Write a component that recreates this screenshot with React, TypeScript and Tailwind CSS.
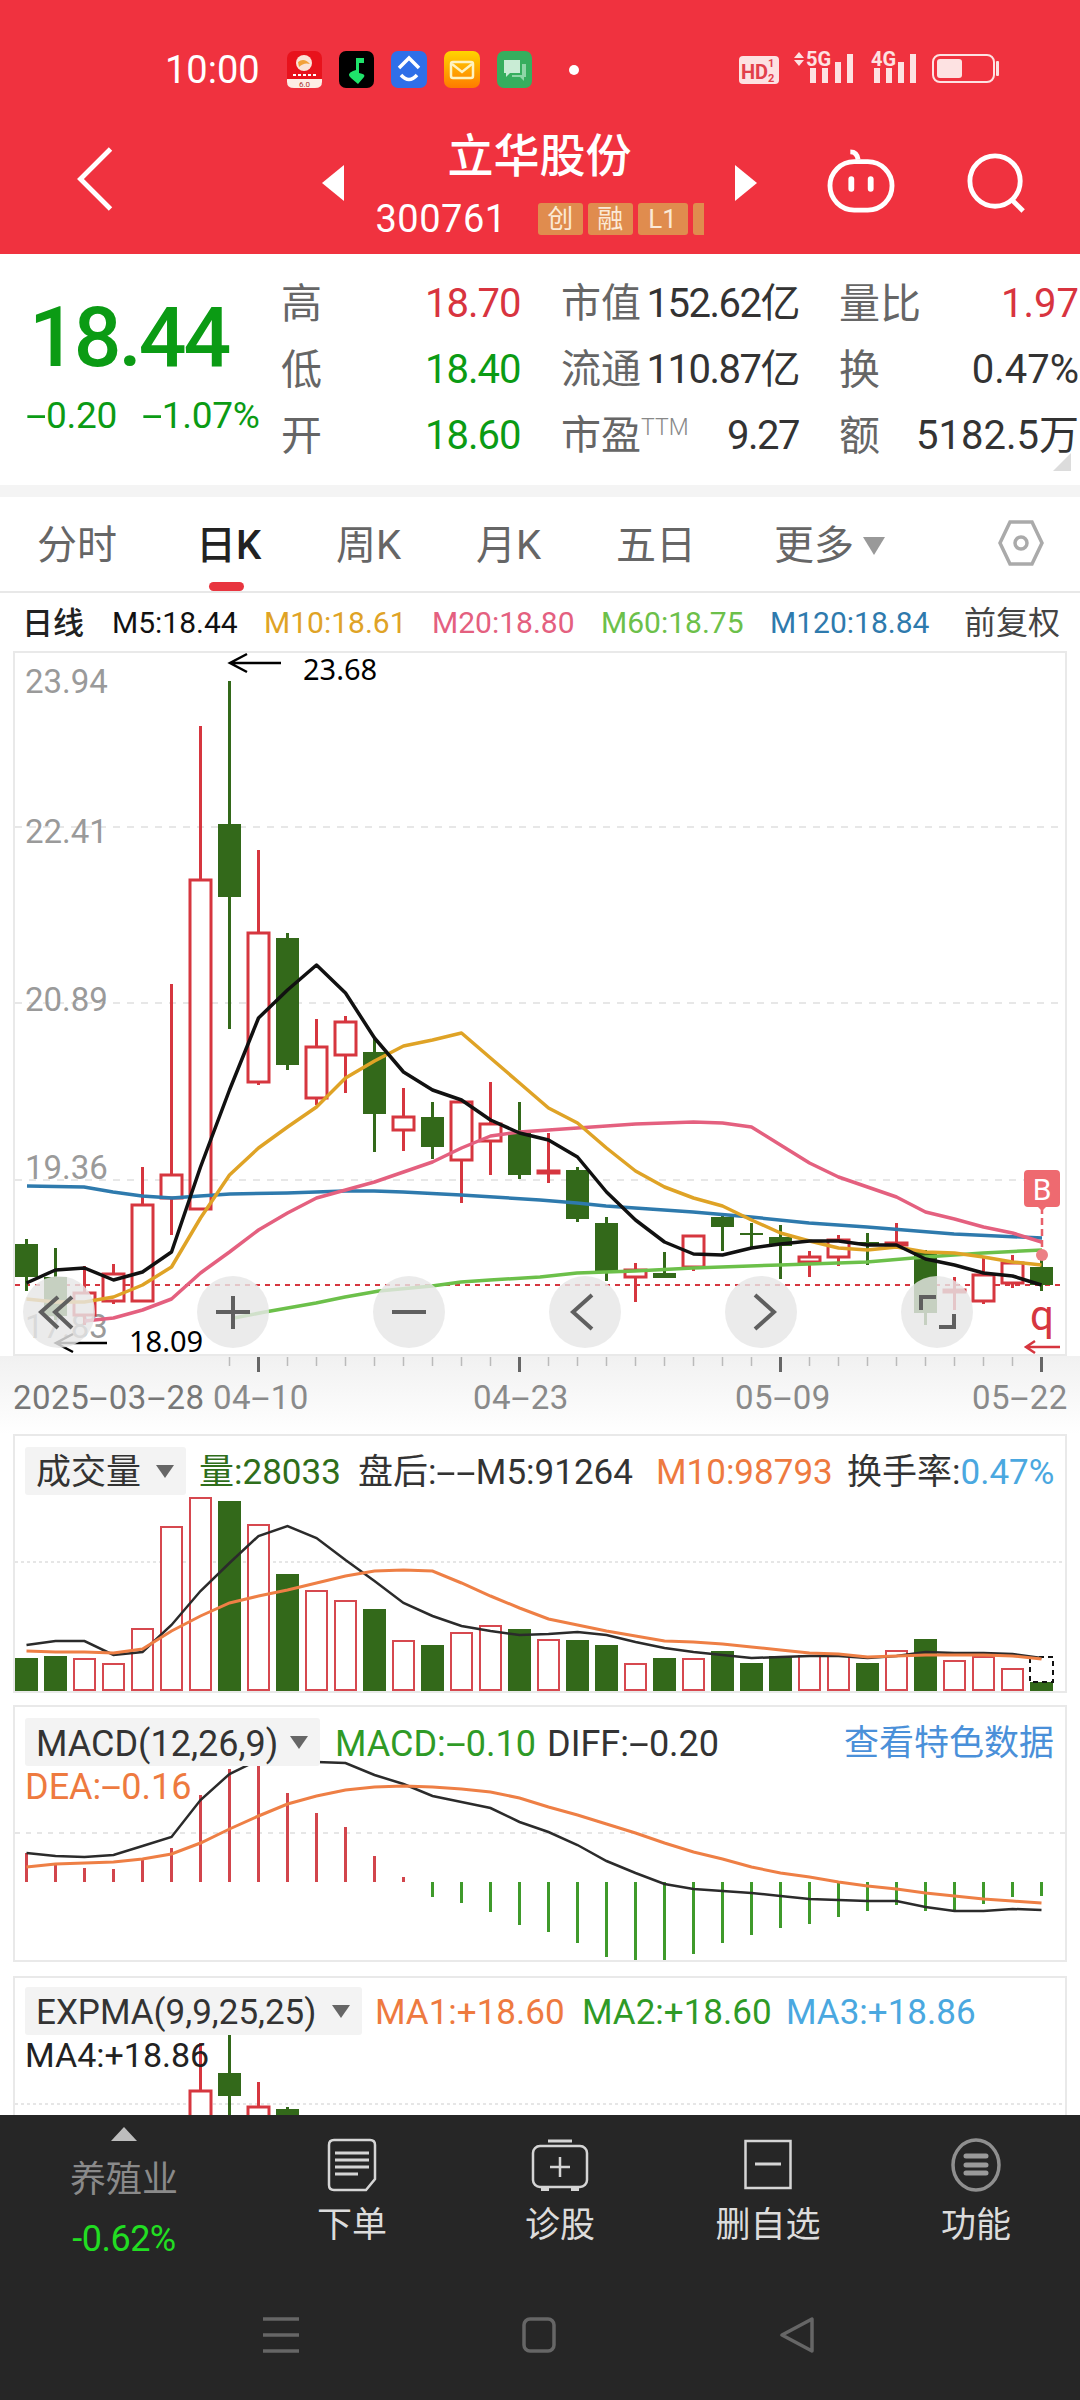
const RED = "#d6363f";
const DARK_GREEN = "#33691a";
const cx = (i: number) => 26.5 + 29 * i;
const line = (ys: number[], from = 0) => ys.map((y, i) => `${cx(i + from)},${y}`).join(" ");

// color, high, body top, body bottom, low
const candles: [string, number, number, number, number][] = [
  ["g", 1239, 1244, 1277, 1291], ["g", 1248, 1277, 1316, 1320], ["r", 1266, 1293, 1315, 1325], ["r", 1264, 1274, 1301, 1304],
  ["r", 1167, 1205, 1301, 1301], ["r", 984, 1175, 1198, 1235], ["r", 726, 880, 1209, 1209], ["g", 681, 824, 897, 1029],
  ["r", 850, 933, 1082, 1085], ["g", 933, 938, 1065, 1070], ["r", 1019, 1047, 1098, 1105], ["r", 1016, 1022, 1055, 1093],
  ["g", 1037, 1052, 1114, 1152], ["r", 1088, 1117, 1130, 1151], ["g", 1102, 1117, 1147, 1159], ["r", 1100, 1102, 1160, 1203],
  ["r", 1082, 1124, 1141, 1175], ["g", 1102, 1133, 1175, 1179], ["r", 1133, 1171, 1173, 1183], ["g", 1167, 1170, 1219, 1222],
  ["g", 1217, 1223, 1272, 1281], ["r", 1263, 1270, 1277, 1302], ["g", 1252, 1273, 1278, 1278], ["r", 1236, 1236, 1267, 1271],
  ["g", 1215, 1217, 1227, 1251], ["g", 1223, 1233, 1235, 1248], ["g", 1225, 1237, 1246, 1279], ["r", 1251, 1257, 1262, 1277],
  ["r", 1235, 1240, 1257, 1266], ["g", 1233, 1242, 1245, 1265], ["r", 1223, 1243, 1245, 1245], ["g", 1250, 1251, 1313, 1325],
  ["r", 1277, 1290, 1292, 1310], ["r", 1258, 1275, 1301, 1304], ["r", 1255, 1263, 1283, 1288], ["g", 1257, 1267, 1285, 1291],
];
const m5 = [1283,1270,1268,1280,1272,1252,1167,1090,1018,990,965,993,1038,1072,1090,1100,1120,1133,1140,1157,1192,1220,1242,1254,1255,1248,1244,1241,1241,1245,1245,1259,1265,1273,1276,1285];
const m10 = [1299,1302,1302,1297,1285,1267,1218,1175,1148,1127,1107,1078,1061,1046,1040,1033,1058,1083,1108,1123,1148,1171,1187,1198,1206,1220,1233,1241,1248,1250,1247,1252,1253,1257,1262,1265];
const m20 = [1321,1318,1310,1299,1273,1252,1230,1213,1198,1190,1182,1172,1162,1148,1136,1132,1130,1128,1126,1124,1123,1122,1123,1127,1145,1163,1177,1187,1197,1212,1219,1227,1233,1242];
const m60 = "234,1318 265,1312 316,1303 345,1297 379,1291 432,1286 461,1282 490,1280 540,1277 577,1273 635,1271 693,1268 780,1265 867,1262 925,1257 983,1253 1042,1250";
const m120 = "27,1186 84,1187 113,1192 142,1196 172,1198 200,1196 230,1194 287,1193 345,1191 374,1191 403,1192 461,1195 540,1200 577,1203 606,1206 693,1212 751,1217 809,1223 867,1227 954,1234 1042,1238";

const vols = [1660,1658,1661,1666,1631,1529,1500,1503,1527,1576,1593,1603,1611,1643,1647,1635,1628,1631,1642,1642,1647,1666,1660,1661,1653,1665,1658,1658,1658,1665,1653,1641,1663,1659,1671,1684];
const volBlack = [1647,1643,1643,1657,1654,1627,1593,1565,1538,1528,1540,1562,1583,1605,1618,1628,1633,1637,1636,1634,1637,1644,1650,1654,1657,1660,1659,1658,1658,1660,1658,1654,1655,1655,1656,1660];
const volOrange = [1653,1654,1654,1655,1651,1633,1618,1605,1598,1592,1585,1578,1573,1572,1573,1585,1598,1610,1621,1627,1633,1638,1643,1644,1646,1649,1652,1655,1656,1659,1658,1657,1657,1657,1658,1661];

const macdBars = [1853,1865,1868,1869,1860,1848,1795,1769,1766,1793,1813,1827,1856,1877,1897,1903,1912,1925,1932,1943,1957,1962,1962,1954,1943,1935,1928,1924,1917,1911,1905,1911,1911,1904,1897,1896];
const diff = [1853,1856,1857,1855,1846,1837,1800,1774,1760,1761,1762,1763,1775,1784,1796,1802,1808,1822,1832,1845,1861,1873,1884,1889,1891,1893,1896,1899,1900,1901,1901,1907,1911,1911,1909,1910];
const dea = [1867,1864,1863,1862,1859,1854,1843,1829,1816,1804,1796,1790,1787,1786,1787,1789,1792,1798,1807,1815,1824,1833,1843,1852,1859,1867,1873,1877,1882,1886,1889,1893,1896,1899,1901,1903];

// this app's number font has long dashes, Roboto's hyphen is short
function Dashed({ text }: { text: string }) {
  const parts = text.split("-");
  return (
    <>
      {parts.map((p, i) => (
        <span key={i}>
          {i > 0 && <span className="mx-[5px] inline-block scale-x-[2]">-</span>}
          {p}
        </span>
      ))}
    </>
  );
}

function Candle({ i, c }: { i: number; c: [string, number, number, number, number] }) {
  const [kind, high, top, bottom, low] = c;
  const x = cx(i);
  const color = kind === "r" ? RED : DARK_GREEN;
  return (
    <g>
      <line x1={x} x2={x} y1={high} y2={top} stroke={color} strokeWidth={3} />
      <line x1={x} x2={x} y1={bottom} y2={low} stroke={color} strokeWidth={3} />
      {kind === "r" ? (
        <rect x={x - 10.5} y={top} width={21} height={bottom - top} fill="#fff" stroke={color} strokeWidth={3} />
      ) : (
        <rect x={x - 11.5} y={top} width={23} height={bottom - top} fill={color} />
      )}
    </g>
  );
}

function CircleButton({ x, children }: { x: number; children: React.ReactNode }) {
  return (
    <g>
      <circle cx={x} cy={1312} r={36} fill="#e6e6e6" fillOpacity={0.82} />
      <g fill="none" stroke="#5f5f5f" strokeWidth={4}>{children}</g>
    </g>
  );
}

function MainChart() {
  const grid = [827, 1003, 1180];
  const labels: [string, number][] = [["23.94", 693], ["22.41", 843], ["20.89", 1011], ["19.36", 1179], ["17.83", 1338]];
  return (
    <svg width={1050} height={701} viewBox="15 653 1050 701" className="block overflow-visible">
      {grid.map((y) => (
        <line key={y} x1={15} x2={1065} y1={y} y2={y} stroke="#dfdfdf" strokeWidth={1.5} strokeDasharray="7 7" />
      ))}
      {labels.map(([t, y]) => (
        <text key={t} x={25} y={y} fontSize={33} fill="#9a9a9a">{t}</text>
      ))}
      <line x1={15} x2={1065} y1={1285} y2={1285} stroke="#d6363f" strokeWidth={2} strokeDasharray="5 5" />
      {candles.map((c, i) => <Candle key={i} i={i} c={c} />)}
      <g fill="none" strokeWidth={3.5} strokeLinejoin="round">
        <polyline points={m120} stroke="#2e7aad" />
        <polyline points={m60} stroke="#6cc04a" />
        <polyline points={line(m20, 2)} stroke="#e4607f" />
        <polyline points={line(m10)} stroke="#dfa326" />
        <polyline points={line(m5)} stroke="#111" />
      </g>
      <path d="M281 663H230M247 654L230 663L247 672" fill="none" stroke="#000" strokeWidth={2.5} />
      <text x={303} y={680} fontSize={29} fill="#000" fontFamily="Noto Sans">23.68</text>
      <path d="M107 1343H56M73 1334L56 1343L73 1352" fill="none" stroke="#000" strokeWidth={2.5} />
      <text x={129} y={1352} fontSize={29} fill="#000" fontFamily="Noto Sans">18.09</text>
      <CircleButton x={59}><path d="M58 1297L41 1312L58 1328M72 1297L55 1312L72 1328" /></CircleButton>
      <CircleButton x={233}><path d="M233 1296V1329M216 1312H250" /></CircleButton>
      <CircleButton x={409}><path d="M392 1312H426" /></CircleButton>
      <CircleButton x={585}><path d="M592 1295L573 1312L592 1329" /></CircleButton>
      <CircleButton x={761}><path d="M755 1295L774 1312L755 1329" /></CircleButton>
      <CircleButton x={937}><path d="M921 1310V1297H936M954 1314V1327H939" /></CircleButton>
      <line x1={1042} x2={1042} y1={1207} y2={1255} stroke="#e8606a" strokeWidth={2.5} strokeDasharray="7 4" />
      <circle cx={1042} cy={1255} r={6} fill="#ec7f85" />
      <path d="M1028 1170H1056Q1060 1170 1060 1174V1203Q1060 1207 1056 1207H1046L1042 1211L1038 1207H1028Q1024 1207 1024 1203V1174Q1024 1170 1028 1170Z" fill="#ee6a70" />
      <text x={1042} y={1200} fontSize={30} fill="#fff" textAnchor="middle">B</text>
      <text x={1042} y={1330} fontSize={42} fill="#d6363f" textAnchor="middle">q</text>
      <path d="M1060 1347H1026M1035 1341L1026 1347L1035 1353" fill="none" stroke="#d6363f" strokeWidth={2.5} />
    </svg>
  );
}

function VolumeChart() {
  return (
    <svg width={1050} height={255} viewBox="15 1438 1050 255" className="absolute inset-0">
      <line x1={15} x2={1065} y1={1564} y2={1564} stroke="#dedede" strokeWidth={1.5} strokeDasharray="3 3" />
      {vols.map((y, i) => {
        const red = [2,3,4,5,6,8,10,11,13,15,16,18,21,23,27,28,30,32,33,34].includes(i);
        return red ? (
          <rect key={i} x={cx(i) - 10.5} y={y} width={21} height={1692 - y} fill="#fff" stroke="#d6484f" strokeWidth={2} />
        ) : (
          <rect key={i} x={cx(i) - 11.5} y={y} width={23} height={1693 - y} fill={DARK_GREEN} />
        );
      })}
      <rect x={1030} y={1659} width={23} height={25} fill="#fff" stroke="#111" strokeWidth={2} strokeDasharray="5 4" />
      <polyline points={line(volBlack)} fill="none" stroke="#2b2b2b" strokeWidth={2.5} />
      <polyline points={line(volOrange)} fill="none" stroke="#ee7f45" strokeWidth={3} />
    </svg>
  );
}

function MacdChart() {
  return (
    <svg width={1050} height={253} viewBox="15 1707 1050 253" className="absolute inset-0">
      <line x1={15} x2={1065} y1={1833} y2={1833} stroke="#dedede" strokeWidth={1.5} strokeDasharray="5 6" />
      {macdBars.map((y, i) => {
        const red = i < 14;
        return <line key={i} x1={cx(i)} x2={cx(i)} y1={red ? y : 1882} y2={red ? 1882 : y} stroke={red ? "#d2454c" : "#3f9a2b"} strokeWidth={3} />;
      })}
      <polyline points={line(diff)} fill="none" stroke="#2b2b2b" strokeWidth={2.5} />
      <polyline points={line(dea)} fill="none" stroke="#ee7f45" strokeWidth={3} />
    </svg>
  );
}

function ExpmaChart() {
  return (
    <svg width={1050} height={139} viewBox="15 1978 1050 139" className="absolute inset-0">
      <line x1={15} x2={1065} y1={2104} y2={2104} stroke="#dedede" strokeWidth={1.5} strokeDasharray="3 3" />
      <Candle i={6} c={["r", 2043, 2091, 2130, 2130]} />
      <Candle i={7} c={["g", 2030, 2073, 2096, 2130]} />
      <Candle i={8} c={["r", 2082, 2107, 2130, 2130]} />
      <Candle i={9} c={["g", 2107, 2109, 2130, 2130]} />
    </svg>
  );
}

function Caret() {
  return <svg width={18} height={13} viewBox="0 0 18 13" className="shrink-0"><path d="M0 0H18L9 13Z" fill="#666" /></svg>;
}

function AppIcons() {
  return (
    <div className="flex gap-[17px]">
      <svg width={35} height={37} viewBox="0 0 35 37" className="overflow-visible">
        <rect width={35} height={37} rx={7} fill="#e8121c" />
        <path d="M0 28H35V31Q35 37 28 37H7Q0 37 0 31Z" fill="#fdeee6" />
        <circle cx={17} cy={12} r={8} fill="#fbe3d8" />
        <path d="M11 11Q17 6 23 13Q17 11 12 16Z" fill="#f2a13a" />
        <path d="M6 24H29" stroke="#fff" strokeWidth={2} strokeDasharray="3 2" />
        <text x={17.5} y={35.5} fontSize={8} fill="#a33" textAnchor="middle">6.0</text>
      </svg>
      <svg width={35} height={37} viewBox="0 0 35 37">
        <rect width={35} height={37} rx={7} fill="#000" />
        <path d="M17 7H25V12H20V22Q27 23 25 26L19 33L12 27Q7 23 14 20L17 19Z" fill="#1fe36b" />
      </svg>
      <svg width={36} height={37} viewBox="0 0 36 37">
        <rect width={36} height={37} rx={7} fill="#2f6fe8" />
        <path d="M8 17L18 7L28 17M10 24Q18 33 26 24" fill="none" stroke="#fff" strokeWidth={3.5} />
      </svg>
      <svg width={36} height={37} viewBox="0 0 36 37">
        <defs>
          <linearGradient id="mail" x1="0" y1="0" x2="0" y2="1">
            <stop offset="0" stopColor="#ffd400" />
            <stop offset="1" stopColor="#ff7a00" />
          </linearGradient>
        </defs>
        <rect width={36} height={37} rx={7} fill="url(#mail)" />
        <rect x={7} y={11} width={22} height={16} rx={2} fill="none" stroke="#fff3c0" strokeWidth={2.5} />
        <path d="M8 13L18 21L28 13" fill="none" stroke="#fff3c0" strokeWidth={2.5} />
      </svg>
      <svg width={35} height={37} viewBox="0 0 35 37">
        <rect width={35} height={37} rx={7} fill="#36ae5e" />
        <path d="M7 9H23V22H13L9 26V22H7Z" fill="#c9ecd5" />
        <path d="M25 13H29V26H27V30L23 26H15V24H25Z" fill="#8ed6a7" />
      </svg>
    </div>
  );
}

function StatusRight() {
  const barsA = [[807, 68], [819, 68], [832, 62], [844, 54]];
  const barsB = [[871, 68], [883, 68], [895, 62], [907, 54]];
  return (
    <svg width={262} height={53} viewBox="736 43 262 53" className="block">
      <g fill="#fde2e2">
        <rect x={736} y={56} width={40} height={28} rx={4} />
        <path d="M796 52L801 58H791ZM796 66L801 60H791Z" />
        <text x={803} y={66} fontSize={20} fontWeight={700}>5G</text>
        <text x={868} y={66} fontSize={20} fontWeight={700}>4G</text>
        {barsA.concat(barsB).map(([x, y]) => <rect key={x} x={x} y={y} width={6} height={83 - y} />)}
        <rect x={934} y={59} width={25} height={19} rx={3} />
        <rect x={993} y={61} width={3} height={15} rx={1} />
      </g>
      <text x={738} y={79} fontSize={20} fontWeight={700} fill="#e2404a">HD</text>
      <text x={765} y={67} fontSize={11} fontWeight={700} fill="#e2404a">1</text>
      <text x={765} y={82} fontSize={11} fontWeight={700} fill="#e2404a">2</text>
      <rect x={930} y={55} width={61} height={27} rx={7} fill="none" stroke="#fde2e2" strokeWidth={2} />
    </svg>
  );
}

function Header() {
  return (
    <div className="h-[254px] shrink-0 overflow-hidden bg-[#f0323f] pt-[51px] text-white">
      <div className="flex h-[37px] items-center pl-[165px]">
        <span className="w-[122px] text-[38px] leading-none">10:00</span>
        <AppIcons />
        <span className="ml-[37px] h-[10px] w-[10px] rounded-full bg-white" />
        <span className="ml-[160px]"><StatusRight /></span>
      </div>
      <div className="mt-[38px] flex items-start pl-[77px]">
        <svg width={36} height={64} viewBox="0 0 36 66" className="mt-[21px]"><path d="M34 2L3 33L34 64" fill="none" stroke="#fff" strokeWidth={5} /></svg>
        <svg width={22} height={36} viewBox="0 0 22 36" className="ml-[209px] mt-[39px]"><path d="M22 0V36L0 18Z" fill="#fff" /></svg>
        <div className="flex w-[391px] flex-col items-center">
          <div className="h-[60px] text-[46px] font-medium leading-[60px]">立华股份</div>
          <div className="mt-[16px] flex w-[328px] items-center gap-[5px]">
            <span className="mr-[26px] shrink-0 text-[38px] leading-[34px] tracking-[0.5px]">300761</span>
            <span className="flex h-[32px] w-[45px] shrink-0 items-center justify-center rounded-[3px] bg-[#e08c4e] text-[26px] text-[#fbe9d6]">创</span>
            <span className="flex h-[32px] w-[45px] shrink-0 items-center justify-center rounded-[3px] bg-[#e08c4e] text-[26px] text-[#fbe9d6]">融</span>
            <span className="flex h-[32px] w-[50px] shrink-0 items-center justify-center rounded-[3px] bg-[#e08c4e] text-[26px] text-[#fbe9d6]">L1</span>
            <span className="h-[32px] w-[11px] shrink-0 rounded-l-[3px] bg-[#e08c4e]" />
          </div>
        </div>
        <svg width={22} height={36} viewBox="0 0 22 36" className="mt-[39px]"><path d="M0 0V36L22 18Z" fill="#fff" /></svg>
        <svg width={70} height={64} viewBox="0 0 70 66" className="ml-[69px] mt-[23px]" fill="none" stroke="#fff" strokeWidth={5}>
          <path d="M24 3Q31 3 32 11" />
          <rect x={3} y={13} width={64} height={50} rx={25} />
          <path d="M25 31V41M45 31V41" strokeWidth={6} strokeLinecap="round" />
        </svg>
        <svg width={60} height={60} viewBox="0 0 62 62" className="ml-[71px] mt-[27px]" fill="none" stroke="#fff" strokeWidth={5}>
          <circle cx={29} cy={29} r={26} />
          <path d="M46 48L58 60" />
        </svg>
      </div>
    </div>
  );
}

function QuotePanel() {
  const rows = [
    { l: "高", v: "18.70", c: "text-[#d8343f]", a: "市值", av: "152.62亿", b: "量比", bv: "1.97", bc: "text-[#d8343f]" },
    { l: "低", v: "18.40", c: "text-[#0b9b14]", a: "流通", av: "110.87亿", b: "换", bv: "0.47%", bc: "text-[#333]" },
    { l: "开", v: "18.60", c: "text-[#0b9b14]", a: "市盈", av: "9.27", b: "额", bv: "5182.5万", bc: "text-[#333]" },
  ];
  return (
    <div className="relative flex h-[231px] shrink-0 bg-white">
      <div className="w-[281px] shrink-0 pl-[29px]">
        <div className="mt-[39px] h-[90px] text-[84px] font-medium leading-[90px] tracking-[-3px] text-[#0b9b14]">18.44</div>
        <div className="-ml-[3px] mt-[12px] flex h-[40px] items-center gap-[25px] whitespace-nowrap text-[37px] leading-none tracking-[-0.3px] text-[#0b9b14]">
          <span><Dashed text="-0.20" /></span>
          <span><Dashed text="-1.07%" /></span>
        </div>
      </div>
      <div className="mt-[17px] flex flex-col">
        {rows.map((r) => (
          <div key={r.l} className="flex h-[66px] items-center whitespace-nowrap leading-none">
            <div className="w-[144px] text-[41px] text-[#666]">{r.l}</div>
            <div className={`w-[136px] text-[40px] tracking-[-1px] ${r.c}`}>{r.v}</div>
            <div className="flex w-[238px] items-center justify-between">
              <span className="flex items-start text-[40px] text-[#666]">
                {r.a}
                {r.a === "市盈" && <span className="text-[23px] font-light text-[#888]">TTM</span>}
              </span>
              <span className="text-[40px] tracking-[-1.5px] text-[#333]">{r.av}</span>
            </div>
            <div className="ml-[40px] flex w-[240px] items-center justify-between">
              <span className="text-[41px] text-[#666]">{r.b}</span>
              <span className={`text-[40px] ${r.bc}`}>{r.bv}</span>
            </div>
          </div>
        ))}
      </div>
      <svg width={18} height={18} viewBox="0 0 18 18" className="absolute right-[9px] bottom-[14px]"><path d="M18 0V18H0Z" fill="#dcdcdc" /></svg>
    </div>
  );
}

function Tabs() {
  return (
    <div className="flex h-[96px] shrink-0 items-center border-b-2 border-[#e8e8e8] bg-white pl-[37px] pt-[4px] text-[40px] leading-none text-[#666]">
      <span className="w-[159px]">分时</span>
      <span className="relative w-[140px] font-medium text-[#222]">
        日K
        <span className="absolute left-[13px] top-[56px] h-[9px] w-[35px] rounded-full bg-[#e8353f]" />
      </span>
      <span className="w-[140px]">周K</span>
      <span className="w-[140px]">月K</span>
      <span className="w-[158px]">五日</span>
      <span className="flex w-[224px] items-center gap-[9px]">
        更多
        <svg width={22} height={18} viewBox="0 0 22 18"><path d="M0 0H22L11 18Z" fill="#999" /></svg>
      </span>
      <svg width={46} height={46} viewBox="0 0 46 46" fill="none" stroke="#aaa" strokeWidth={3.5} className="-mt-[6px]">
        <path d="M12 2H34L44 23L34 44H12L2 23Z" />
        <circle cx={23} cy={23} r={6} />
      </svg>
    </div>
  );
}

function Legend() {
  return (
    <div className="flex h-[58px] shrink-0 items-center pl-[22px] pt-[2px] text-[30px] leading-none">
      <span className="w-[90px] text-[31px] font-medium text-[#222]">日线</span>
      <span className="w-[152px] text-[#111]">M5:18.44</span>
      <span className="w-[168px] text-[#dfa326]">M10:18.61</span>
      <span className="w-[169px] text-[#e4607f]">M20:18.80</span>
      <span className="w-[169px] text-[#6cc04a]">M60:18.75</span>
      <span className="w-[194px] text-[#2e7aad]">M120:18.84</span>
      <span className="text-[32px] text-[#444]">前复权</span>
    </div>
  );
}

function DateAxis() {
  const ticks = Array.from({ length: 29 }, (_, i) => i + 7);
  return (
    <div className="h-[78px] shrink-0 bg-linear-to-b from-[#f1f1f1] to-white">
      <svg width={1080} height={16} viewBox="0 1356 1080 16" className="block">
        {ticks.map((i) => {
          const big = (i - 8) % 9 === 0;
          return <line key={i} x1={cx(i)} x2={cx(i)} y1={1357} y2={big ? 1372 : 1366} stroke={big ? "#666" : "#bbb"} strokeWidth={big ? 3 : 1.5} />;
        })}
      </svg>
      <div className="mt-[8px] flex whitespace-nowrap pl-[13px] text-[33px] leading-[36px] tracking-[0.5px] text-[#8a8a8a]">
        <span className="w-[200px] text-[#777]"><Dashed text="2025-03-28" /></span>
        <span className="w-[260px]"><Dashed text="04-10" /></span>
        <span className="w-[262px]"><Dashed text="04-23" /></span>
        <span className="w-[237px]"><Dashed text="05-09" /></span>
        <span><Dashed text="05-22" /></span>
      </div>
    </div>
  );
}

function Chip({ label, width }: { label: string; width: string }) {
  return (
    <div className={`flex h-[48px] shrink-0 items-center justify-between rounded-[3px] bg-[#f3f3f3] pl-[11px] pr-[12px] text-[#333] ${width}`}>
      <span className="pt-[3px]">{label}</span>
      <Caret />
    </div>
  );
}

function BottomBar() {
  const actions = ["下单", "诊股", "删自选", "功能"];
  const icons = [
    <svg key="a" width={50} height={54} viewBox="0 0 50 54" fill="none" stroke="#d5d5d5" strokeWidth={2.5}>
      <path d="M7 2H43Q48 2 48 7V41L39 52H7Q2 52 2 47V7Q2 2 7 2Z" />
      <path d="M8 15H42M8 22H42M8 29H42M8 36H31" strokeWidth={3} />
    </svg>,
    <svg key="b" width={58} height={54} viewBox="0 0 58 54" fill="none" stroke="#d5d5d5" strokeWidth={2.5}>
      <path d="M17 3H41" strokeWidth={3} />
      <rect x={2} y={8} width={54} height={41} rx={7} />
      <path d="M29 19V39M19 29H39" />
      <path d="M10 49H18V53H10ZM40 49H48V53H40Z" fill="#d5d5d5" stroke="none" />
    </svg>,
    <svg key="c" width={48} height={54} viewBox="0 0 48 54" fill="none" stroke="#d5d5d5" strokeWidth={2.5}>
      <rect x={1.5} y={3} width={45} height={47} />
      <path d="M11 26H37" strokeWidth={3} />
    </svg>,
    <svg key="d" width={50} height={54} viewBox="0 0 50 54" fill="none">
      <ellipse cx={25} cy={27} rx={23} ry={25} stroke="#8f8f8f" strokeWidth={3.5} />
      <path d="M15 18H35M15 27H35M15 35H35" stroke="#9a9a9a" strokeWidth={5} strokeLinecap="round" />
    </svg>,
  ];
  return (
    <div className="h-[285px] shrink-0 bg-[#262626]">
      <div className="flex h-[170px]">
        <div className="flex w-[248px] flex-col items-center pt-[12px]">
          <svg width={26} height={14} viewBox="0 0 26 14"><path d="M13 0L26 14H0Z" fill="#bdbdbd" /></svg>
          <span className="mt-[17px] text-[36px] leading-[44px] text-[#8a8a8a]">养殖业</span>
          <span className="mt-[15px] text-[36px] leading-[44px] tracking-[-0.5px] text-[#22dd22]">-0.62%</span>
        </div>
        {actions.map((a, i) => (
          <div key={a} className="flex w-[208px] flex-col items-center pt-[23px]">
            {icons[i]}
            <span className="mt-[12px] text-[35px] leading-[44px] text-[#dcdcdc]">{a}</span>
          </div>
        ))}
      </div>
      <div className="flex pl-[263px] pt-[32px]">
        <svg width={36} height={36} viewBox="0 0 36 36"><path d="M0 2H36M0 18H36M0 34H36" stroke="#666" strokeWidth={3.5} /></svg>
        <svg width={34} height={36} viewBox="0 0 34 36" className="ml-[223px]"><rect x={2} y={2} width={30} height={32} rx={6} fill="none" stroke="#666" strokeWidth={3.5} /></svg>
        <svg width={34} height={36} viewBox="0 0 34 36" className="ml-[224px]"><path d="M32 2V34L2 18Z" fill="none" stroke="#666" strokeWidth={3.5} strokeLinejoin="round" /></svg>
      </div>
    </div>
  );
}

export default function App() {
  return (
    <div className="flex h-[2400px] w-[1080px] flex-col overflow-hidden bg-white font-['Roboto','Noto_Sans_CJK_SC',sans-serif]">
      <Header />
      <QuotePanel />
      <div className="h-[12px] shrink-0 bg-[#f4f4f4]" />
      <Tabs />
      <Legend />
      <div className="mx-[13px] h-[705px] w-[1054px] shrink-0 border-2 border-[#e9e9e9]">
        <MainChart />
      </div>
      <DateAxis />
      <div className="relative mx-[13px] h-[259px] w-[1054px] shrink-0 border-2 border-[#e9e9e9] pl-[10px] pt-[11px]">
        <VolumeChart />
        <div className="relative flex items-center whitespace-nowrap text-[35px] leading-none [&>span]:pt-[3px]">
          <Chip label="成交量" width="w-[161px]" />
          <span className="ml-[13px] w-[159px] text-[#2f6e1b]">量:28033</span>
          <span className="w-[298px] text-[#333]"><Dashed text="盘后:--M5:91264" /></span>
          <span className="w-[191px] text-[#ee7a3f]">M10:98793</span>
          <span className="text-[#333]">换手率:<span className="text-[#4aa8e0]">0.47%</span></span>
        </div>
      </div>
      <div className="relative mx-[13px] mt-[12px] h-[257px] w-[1054px] shrink-0 border-2 border-[#e9e9e9] pl-[10px] pt-[11px]">
        <MacdChart />
        <div className="relative flex items-center whitespace-nowrap text-[36px] leading-none [&>span]:pt-[3px]">
          <Chip label="MACD(12,26,9)" width="w-[295px]" />
          <span className="ml-[15px] w-[212px] text-[#2f9a26]"><Dashed text="MACD:-0.10" /></span>
          <span className="text-[#333]"><Dashed text="DIFF:-0.20" /></span>
          <span className="ml-auto mr-[11px] text-[35px] text-[#4a90d9]">查看特色数据</span>
        </div>
        <div className="relative mt-[1px] text-[36px] leading-[40px] text-[#ee7a3f]"><Dashed text="DEA:-0.16" /></div>
      </div>
      <div className="relative mx-[13px] mt-[14px] h-[139px] w-[1054px] shrink-0 overflow-hidden border-x-2 border-t-2 border-[#e9e9e9] pl-[10px] pt-[9px]">
        <ExpmaChart />
        <div className="relative flex items-center whitespace-nowrap text-[35px] leading-none [&>span]:pt-[3px]">
          <Chip label="EXPMA(9,9,25,25)" width="w-[337px]" />
          <span className="ml-[13px] w-[207px] text-[#ee7a3f]">MA1:+18.60</span>
          <span className="w-[204px] text-[#2f9a26]">MA2:+18.60</span>
          <span className="text-[#4aa8e0]">MA3:+18.86</span>
        </div>
        <div className="relative mt-[-2px] text-[34px] leading-[44px] text-[#222]">MA4:+18.86</div>
      </div>
      <BottomBar />
    </div>
  );
}
